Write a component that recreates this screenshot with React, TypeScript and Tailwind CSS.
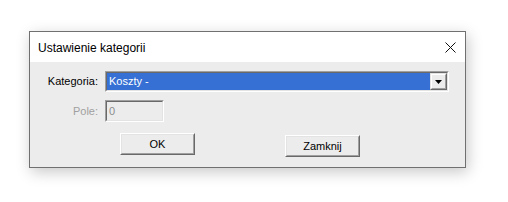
import React from 'react';

const font = { fontFamily: '"Liberation Sans", Arial, sans-serif' };

function Sunken({ className = '', children }: { className?: string; children?: React.ReactNode }) {
  return (
    <div className={`border border-t-[#a0a0a0] border-l-[#a0a0a0] border-b-white border-r-white ${className}`}>
      <div className="flex h-full w-full border border-t-[#696969] border-l-[#696969] border-b-[#e3e3e3] border-r-[#e3e3e3]">
        {children}
      </div>
    </div>
  );
}

function WinButton({ label }: { label: string }) {
  return (
    <button className="h-[22px] w-[75px] border border-t-white border-l-white border-b-[#696969] border-r-[#696969] bg-[#ececec] p-0">
      <div className="flex h-full w-full items-center justify-center border border-t-[#e3e3e3] border-l-[#e3e3e3] border-b-[#a0a0a0] border-r-[#a0a0a0] text-[11px] text-black">
        {label}
      </div>
    </button>
  );
}

export default function App() {
  return (
    <div className="h-[202px] w-[508px] bg-white pl-[29px] pt-[31px]" style={font}>
      <div className="flex h-[137px] w-[437px] flex-col border border-[#707070] bg-[#ececec] shadow-[2px_4px_14px_rgba(0,0,0,0.22)]">
        {/* title bar */}
        <div className="flex h-[30px] items-center justify-between bg-white pl-[8px] pr-[9px]">
          <span className="pt-[2px] text-[12px] text-black">Ustawienie kategorii</span>
          <svg width="11" height="11" viewBox="0 0 11 11" className="mt-[1px]">
            <path d="M0.5 0.5 L10.5 10.5 M10.5 0.5 L0.5 10.5" stroke="#111" strokeWidth="1" />
          </svg>
        </div>

        {/* body */}
        <div className="flex flex-col pt-[9px]">
          <div className="flex items-center">
            <span className="w-[68px] pr-0 text-right text-[11px] text-black">Kategoria:</span>
            <Sunken className="ml-[7px] h-[21px] w-[344px]">
              <div className="flex flex-1 items-center bg-[#3670d4] pl-[2px] text-[11px] text-white">Koszty -</div>
              <div className="w-[17px] border border-t-[#e3e3e3] border-l-[#e3e3e3] border-b-[#696969] border-r-[#696969] bg-[#ececec]">
                <div className="flex h-full w-full items-center justify-center border border-t-white border-l-white border-b-[#a0a0a0] border-r-[#a0a0a0]">
                  <svg width="7" height="4" viewBox="0 0 7 4">
                    <path d="M0 0 H7 L3.5 4 Z" fill="#000" />
                  </svg>
                </div>
              </div>
            </Sunken>
          </div>

          <div className="mt-[8px] flex items-center">
            <span className="w-[68px] text-right text-[11px] text-[#a0a0a0]">Pole:</span>
            <Sunken className="ml-[7px] h-[22px] w-[59px]">
              <div className="flex flex-1 items-center pl-[2px] text-[11px] text-[#8c8c8c]">0</div>
            </Sunken>
          </div>

          <div className="mt-[11px] flex pl-[90px]">
            <WinButton label="OK" />
            <div className="ml-[90px]">
              <WinButton label="Zamknij" />
            </div>
          </div>
        </div>
      </div>
    </div>
  );
}
